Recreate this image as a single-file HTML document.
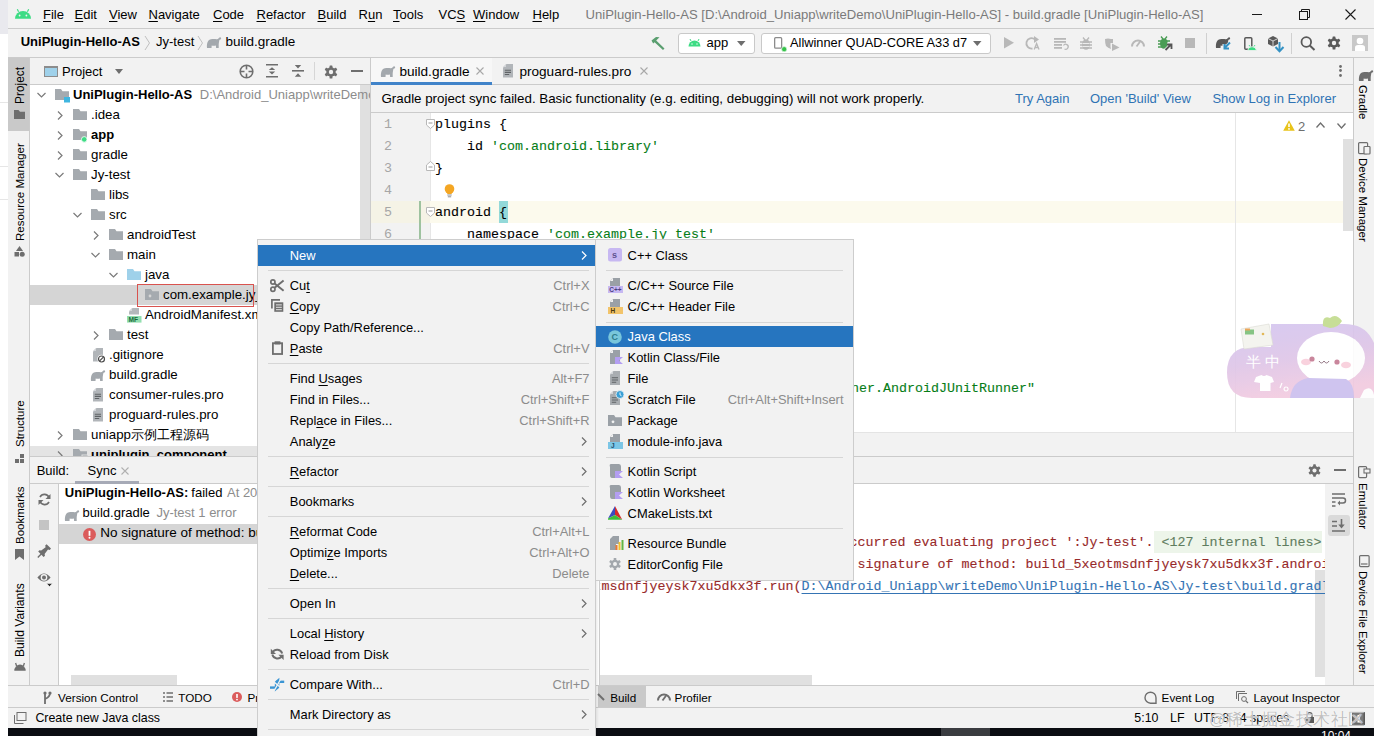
<!DOCTYPE html>
<html><head><meta charset="utf-8">
<style>
*{box-sizing:border-box;margin:0;padding:0}
html,body{width:1374px;height:736px;overflow:hidden;background:#fff}
body{position:relative;font-family:"Liberation Sans",sans-serif;font-size:13px;color:#000}
.a{position:absolute}
.t{position:absolute;white-space:pre;line-height:20px;height:20px}
u{text-decoration:underline;text-underline-offset:2px;text-decoration-thickness:1px}
svg{position:absolute;overflow:visible}
.clip{position:absolute;overflow:hidden}
</style></head><body>

<div class="a" style="left:0px;top:0px;width:8px;height:34px;background:#e9e9ee;"></div>
<div class="a" style="left:0px;top:34px;width:8px;height:694px;background:#ffffff;"></div>
<div class="a" style="left:0px;top:102px;width:8px;height:1px;background:#e6e6e6;"></div>
<div class="a" style="left:0px;top:166px;width:8px;height:1px;background:#e6e6e6;"></div>
<div class="a" style="left:0px;top:199px;width:8px;height:1px;background:#e6e6e6;"></div>
<div class="a" style="left:8px;top:0px;width:1366px;height:728px;background:#f2f2f2;"></div>
<div class="a" style="left:8px;top:28px;width:1366px;height:1px;background:#cbcbcb;"></div>
<svg style="left:15px;top:8px;" width="17" height="12" viewBox="0 0 17 12"><path d="M0 10.8 A8 7.8 0 0 1 16 10.8 Z" fill="#3ddc84"/><path d="M2.3 1.2 L3.6 3.8 M13.7 1.2 L12.4 3.8" stroke="#3ddc84" stroke-width="1.2"/><circle cx="4.6" cy="7.5" r="0.9" fill="#f2f2f2"/><circle cx="11.4" cy="7.5" r="0.9" fill="#f2f2f2"/></svg>
<div class="t" style="left:43px;top:4.80px;font-size:13px;color:#000;font-family:'Liberation Sans',sans-serif;"><u>F</u>ile</div>
<div class="t" style="left:74.5px;top:4.80px;font-size:13px;color:#000;font-family:'Liberation Sans',sans-serif;"><u>E</u>dit</div>
<div class="t" style="left:109px;top:4.80px;font-size:13px;color:#000;font-family:'Liberation Sans',sans-serif;"><u>V</u>iew</div>
<div class="t" style="left:148.5px;top:4.80px;font-size:13px;color:#000;font-family:'Liberation Sans',sans-serif;"><u>N</u>avigate</div>
<div class="t" style="left:213px;top:4.80px;font-size:13px;color:#000;font-family:'Liberation Sans',sans-serif;"><u>C</u>ode</div>
<div class="t" style="left:256.5px;top:4.80px;font-size:13px;color:#000;font-family:'Liberation Sans',sans-serif;"><u>R</u>efactor</div>
<div class="t" style="left:317.5px;top:4.80px;font-size:13px;color:#000;font-family:'Liberation Sans',sans-serif;"><u>B</u>uild</div>
<div class="t" style="left:358.5px;top:4.80px;font-size:13px;color:#000;font-family:'Liberation Sans',sans-serif;">R<u>u</u>n</div>
<div class="t" style="left:393px;top:4.80px;font-size:13px;color:#000;font-family:'Liberation Sans',sans-serif;"><u>T</u>ools</div>
<div class="t" style="left:438.5px;top:4.80px;font-size:13px;color:#000;font-family:'Liberation Sans',sans-serif;">VC<u>S</u></div>
<div class="t" style="left:473px;top:4.80px;font-size:13px;color:#000;font-family:'Liberation Sans',sans-serif;"><u>W</u>indow</div>
<div class="t" style="left:532.5px;top:4.80px;font-size:13px;color:#000;font-family:'Liberation Sans',sans-serif;"><u>H</u>elp</div>
<div class="t" style="left:585.6px;top:4.76px;font-size:13.1px;color:#7a7a7a;font-family:'Liberation Sans',sans-serif;">UniPlugin-Hello-AS [D:\Android_Uniapp\writeDemo\UniPlugin-Hello-AS] - build.gradle [UniPlugin-Hello-AS]</div>
<div class="a" style="left:1252px;top:14px;width:10px;height:1px;background:#1a1a1a;"></div>
<svg style="left:1299px;top:9px;" width="11" height="11" viewBox="0 0 11 11"><rect x="0.5" y="2.5" width="8" height="8" fill="none" stroke="#1a1a1a"/><path d="M2.5 2.5 V0.5 H10.5 V8.5 H8.5" fill="none" stroke="#1a1a1a"/></svg>
<svg style="left:1345px;top:9px;" width="11" height="11" viewBox="0 0 11 11"><path d="M0.5 0.5 L10.5 10.5 M10.5 0.5 L0.5 10.5" stroke="#1a1a1a" stroke-width="1.1"/></svg>
<div class="a" style="left:8px;top:57px;width:1366px;height:1px;background:#cbcbcb;"></div>
<div class="t" style="left:20.7px;top:32.10px;font-size:13px;color:#000;font-family:'Liberation Sans',sans-serif;font-weight:bold;">UniPlugin-Hello-AS</div>
<svg style="left:144px;top:35px;" width="7" height="16" viewBox="0 0 7 16"><path d="M1 1 L5.5 8 L1 15" fill="none" stroke="#c0c0c0" stroke-width="1"/></svg>
<div class="t" style="left:156px;top:32.10px;font-size:13px;color:#000;font-family:'Liberation Sans',sans-serif;">Jy-test</div>
<svg style="left:197px;top:35px;" width="7" height="16" viewBox="0 0 7 16"><path d="M1 1 L5.5 8 L1 15" fill="none" stroke="#c0c0c0" stroke-width="1"/></svg>
<svg style="left:206px;top:36px;" width="16" height="13" viewBox="0 0 16 13"><path transform="translate(0.5 1)" d="M0.5 11 C0.2 7.5 0.8 3.5 3.5 2.6 C5.5 2 8 2 10 2.2 C11 2.3 11.8 1.8 12.4 1 C13 0.2 14.2 0 14.6 0.9 C14.9 1.6 14.3 2.6 13.6 2.6 C13 2.6 12.8 3.4 12.6 4.5 L12.2 7 L12.2 11 L9.6 11 L9.4 8.6 C8 8.9 6.4 8.9 5.2 8.6 L5 11 Z" fill="#a3a8ad"/></svg>
<div class="t" style="left:225.5px;top:31.92px;font-size:13.5px;color:#000;font-family:'Liberation Sans',sans-serif;">build.gradle</div>
<svg style="left:650px;top:36px;" width="16" height="14" viewBox="0 0 16 14"><path d="M1.5 4.5 L6 1 L9.5 1.2 L6.2 4.6 L14.5 12.5 L13 14 L4.6 6.2 L3.2 7.4 Z" fill="#5a9e6f"/></svg>
<div class="a" style="left:677.5px;top:32.5px;width:77px;height:21px;background:#ffffff;border:1px solid #c9c9c9;border-radius:3px"></div>
<svg style="left:688px;top:38px;" width="13" height="9" viewBox="0 0 13 9"><path d="M0.5 8.5 A6 6 0 0 1 12.5 8.5 Z" fill="#3ddc84"/><path d="M3 3 L2 1 M10 3 L11 1" stroke="#3ddc84" stroke-width="1"/><circle cx="4" cy="6" r="0.7" fill="#fff"/><circle cx="9" cy="6" r="0.7" fill="#fff"/></svg>
<div class="t" style="left:706.5px;top:32.50px;font-size:13px;color:#000;font-family:'Liberation Sans',sans-serif;">app</div>
<svg style="left:737px;top:41px;" width="9" height="5" viewBox="0 0 9 5"><path d="M0 0 H8.5 L4.25 5 Z" fill="#6e6e6e"/></svg>
<div class="a" style="left:761.3px;top:32.5px;width:229.5px;height:21px;background:#ffffff;border:1px solid #c9c9c9;border-radius:3px"></div>
<svg style="left:774px;top:37px;" width="13" height="15" viewBox="0 0 13 15"><rect x="0.65" y="0.65" width="7" height="10.5" rx="1" fill="none" stroke="#8c8c8c" stroke-width="1.3"/><circle cx="10.2" cy="12.2" r="2.6" fill="#36c24a" stroke="#fff" stroke-width="0.6"/></svg>
<div class="t" style="left:790px;top:33.26px;font-size:12.8px;color:#000;font-family:'Liberation Sans',sans-serif;">Allwinner QUAD-CORE A33 d7</div>
<svg style="left:973px;top:41px;" width="9" height="5" viewBox="0 0 9 5"><path d="M0 0 H8.5 L4.25 5 Z" fill="#6e6e6e"/></svg>
<svg style="left:1004px;top:37px;" width="10" height="12" viewBox="0 0 10 12"><path d="M0 0 L10 5.7 L0 11.4 Z" fill="#b8b8b8"/></svg>
<svg style="left:1026px;top:36px;" width="15" height="14" viewBox="0 0 15 14"><path d="M9 3.5 A5.2 5.2 0 1 0 6.5 12.5" fill="none" stroke="#b8b8b8" stroke-width="1.8"/><path d="M8 0 L13 3.5 L8 7 Z" fill="#b8b8b8"/><path d="M8.2 13.5 L10.6 7.5 L13 13.5 M9.2 11.5 H12" fill="none" stroke="#b8b8b8" stroke-width="1.3"/></svg>
<svg style="left:1054px;top:38px;" width="15" height="12" viewBox="0 0 15 12"><rect x="0" y="0" width="12" height="1.8" fill="#b8b8b8"/><rect x="0" y="3" width="12" height="1.8" fill="#b8b8b8"/><rect x="0" y="6" width="8" height="1.8" fill="#b8b8b8"/><rect x="0" y="9" width="8" height="1.8" fill="#b8b8b8"/><path d="M9.5 7.5 A2.5 2.5 0 1 1 10.5 11" fill="none" stroke="#b8b8b8" stroke-width="1.3"/></svg>
<svg style="left:1080px;top:36.5px;" width="12" height="13" viewBox="0 0 12 13"><path d="M3 0.5 L5 3 M9 0.5 L7 3" stroke="#b8b8b8" stroke-width="1.3"/><ellipse cx="6" cy="7.5" rx="4" ry="5.2" fill="#b8b8b8"/><path d="M0 5 H12 M0 8 H12 M0 11 H12" stroke="#b8b8b8" stroke-width="1.4"/><path d="M2.5 6.5 H9.5 M2.5 9.5 H9.5" stroke="#f2f2f2" stroke-width="0.9"/></svg>
<svg style="left:1105px;top:37.5px;" width="15" height="13" viewBox="0 0 15 13"><path d="M0 1 Q3 0 6 1 L8 1 L8 5 L5.5 5 L5.5 9 L6 11 Q3 10 1 8 Q0 5 0 1 Z" fill="#b8b8b8"/><path d="M7 5.5 L14.5 9.5 L7 13 Z" fill="#b8b8b8"/></svg>
<svg style="left:1131px;top:38px;" width="14" height="9" viewBox="0 0 14 9"><path d="M1 8.5 A6 6 0 0 1 13 8.5" fill="none" stroke="#b8b8b8" stroke-width="2"/><path d="M5.5 8.5 L9.5 3" stroke="#b8b8b8" stroke-width="1.8"/></svg>
<svg style="left:1158px;top:36px;" width="15" height="15" viewBox="0 0 15 15"><path d="M3 0.5 L5 3 M9 0.5 L7 3" stroke="#499c54" stroke-width="1.3"/><ellipse cx="6" cy="7.5" rx="4" ry="5.2" fill="#499c54"/><path d="M0 5 H12 M0 8 H12 M0 11 H12" stroke="#499c54" stroke-width="1.4"/><path d="M7.5 14 L13 8.5 M9 8 H14 V13" fill="none" stroke="#f2f2f2" stroke-width="3.2"/><path d="M7.5 14 L13 8.5 M9 8.5 H13.5 V13" fill="none" stroke="#555" stroke-width="1.8"/></svg>
<div class="a" style="left:1185px;top:38px;width:10px;height:10px;background:#b8b8b8;"></div>
<div class="a" style="left:1206px;top:33px;width:1px;height:21px;background:#d0d0d0;"></div>
<svg style="left:1215px;top:36px;" width="17" height="16" viewBox="0 0 17 16"><path transform="translate(0.5 1)" d="M0.5 11 C0.2 7.5 0.8 3.5 3.5 2.6 C5.5 2 8 2 10 2.2 C11 2.3 11.8 1.8 12.4 1 C13 0.2 14.2 0 14.6 0.9 C14.9 1.6 14.3 2.6 13.6 2.6 C13 2.6 12.8 3.4 12.6 4.5 L12.2 7 L12.2 11 L9.6 11 L9.4 8.6 C8 8.9 6.4 8.9 5.2 8.6 L5 11 Z" fill="#595959"/><path d="M15 6.5 L9.5 12 M9 8 V12.5 H13.5" fill="none" stroke="#f2f2f2" stroke-width="3"/><path d="M15 6.5 L9.5 12 M9.5 8 V12.5 H14" fill="none" stroke="#3592c4" stroke-width="2"/></svg>
<svg style="left:1244px;top:36.5px;" width="13" height="14" viewBox="0 0 13 14"><rect x="0.8" y="0.8" width="7" height="11.5" rx="1" fill="none" stroke="#595959" stroke-width="1.5"/><path d="M3.6 13.5 A4.5 4.5 0 0 1 12.5 13.5 Z" fill="#3ddc84" stroke="#f2f2f2" stroke-width="0.8"/><path d="M5 8 L6 9.5 M11 8 L10 9.5" stroke="#3ddc84" stroke-width="0.9"/></svg>
<svg style="left:1267.5px;top:36px;" width="16" height="16" viewBox="0 0 16 16"><path d="M5 0 L10 2.5 L10 8 L5 10.5 L0 8 L0 2.5 Z" fill="#595959"/><path d="M0 2.5 L5 5 L10 2.5 M5 5 V10.5" fill="none" stroke="#f2f2f2" stroke-width="0.8"/><path d="M11.5 6 V14" stroke="#3592c4" stroke-width="2"/><path d="M7.5 11 L11.5 15.3 L15.5 11" fill="none" stroke="#3592c4" stroke-width="2"/></svg>
<div class="a" style="left:1291px;top:33px;width:1px;height:21px;background:#d0d0d0;"></div>
<svg style="left:1300px;top:35.5px;" width="16" height="15" viewBox="0 0 16 15"><circle cx="6.3" cy="6" r="4.8" fill="none" stroke="#5a5a5a" stroke-width="1.8"/><path d="M9.8 9.5 L14.5 14" stroke="#5a5a5a" stroke-width="2"/></svg>
<svg style="left:1327px;top:36px;" width="14" height="14" viewBox="0 0 14 14"><circle cx="7" cy="7" r="4.752" fill="#5a5a5a"/><rect x="5.55" y="0.40" width="2.90" height="13.20" rx="0.66" fill="#5a5a5a" transform="rotate(0 7 7)"/><rect x="5.55" y="0.40" width="2.90" height="13.20" rx="0.66" fill="#5a5a5a" transform="rotate(60 7 7)"/><rect x="5.55" y="0.40" width="2.90" height="13.20" rx="0.66" fill="#5a5a5a" transform="rotate(120 7 7)"/><circle cx="7" cy="7" r="2.178" fill="#f2f2f2"/></svg>
<svg style="left:1352px;top:35px;" width="16" height="16" viewBox="0 0 16 16"><rect width="16" height="16" fill="#c8c8c8"/><circle cx="8" cy="6" r="3.3" fill="#fff"/><path d="M3 16 V12.5 Q3 10 6 10 H10 Q13 10 13 12.5 V16 Z" fill="#fff"/></svg>
<!--TOOLBAR-->
<div class="a" style="left:29px;top:58px;width:1px;height:627px;background:#cbcbcb;"></div>
<div class="a" style="left:8px;top:58px;width:21px;height:73px;background:#c9c9c9;"></div>
<div class="t" style="left:10px;top:103.6px;font-size:11.9px;color:#000;transform-origin:0 0;transform:rotate(-90deg)">Project</div>
<svg style="left:14px;top:110px;" width="11" height="9" viewBox="0 0 11 9"><path d="M0 0 H4.5 L6 1.8 H11 V9 H0 Z" fill="#6e6e6e"/></svg>
<div class="t" style="left:10px;top:241px;font-size:11.5px;color:#000;transform-origin:0 0;transform:rotate(-90deg)">Resource Manager</div>
<svg style="left:14px;top:246px;" width="11" height="11" viewBox="0 0 11 11"><path d="M5.5 0 L9 5 H2 Z" fill="#6e6e6e"/><rect x="0.5" y="6" width="4.5" height="4.5" fill="#6e6e6e"/><circle cx="8.2" cy="8.2" r="2.5" fill="#6e6e6e"/></svg>
<div class="t" style="left:10px;top:447px;font-size:11.5px;color:#000;transform-origin:0 0;transform:rotate(-90deg)">Structure</div>
<svg style="left:15px;top:453.5px;" width="10" height="10" viewBox="0 0 10 10"><rect x="5" y="0" width="4" height="4" fill="#6e6e6e"/><rect x="0" y="5" width="4" height="4" fill="#6e6e6e"/><rect x="5" y="5" width="4" height="4" fill="#6e6e6e"/></svg>
<div class="t" style="left:10px;top:544px;font-size:11.5px;color:#000;transform-origin:0 0;transform:rotate(-90deg)">Bookmarks</div>
<svg style="left:15px;top:549px;" width="9" height="11" viewBox="0 0 9 11"><path d="M0 0 H9 V11 L4.5 7.5 L0 11 Z" fill="#6e6e6e"/></svg>
<div class="t" style="left:10px;top:656.5px;font-size:12.1px;color:#000;transform-origin:0 0;transform:rotate(-90deg)">Build Variants</div>
<svg style="left:14px;top:661.5px;" width="12" height="9" viewBox="0 0 12 9"><path d="M0.3 8.8 A5.7 6.2 0 0 1 11.7 8.8 Z" fill="#6e6e6e"/><path d="M2.6 4 L1.6 1 M9.4 4 L10.4 1" stroke="#6e6e6e" stroke-width="1.3"/></svg>
<div class="a" style="left:1353px;top:58px;width:1px;height:627px;background:#cbcbcb;"></div>
<svg style="left:1358px;top:69px;" width="14" height="11" viewBox="0 0 14 11"><path transform="translate(0.5 1)" d="M0.5 11 C0.2 7.5 0.8 3.5 3.5 2.6 C5.5 2 8 2 10 2.2 C11 2.3 11.8 1.8 12.4 1 C13 0.2 14.2 0 14.6 0.9 C14.9 1.6 14.3 2.6 13.6 2.6 C13 2.6 12.8 3.4 12.6 4.5 L12.2 7 L12.2 11 L9.6 11 L9.4 8.6 C8 8.9 6.4 8.9 5.2 8.6 L5 11 Z" fill="#6e6e6e"/></svg>
<div class="t" style="left:1373px;top:85px;font-size:11.5px;color:#000;transform-origin:0 0;transform:rotate(90deg)">Gradle</div>
<svg style="left:1358px;top:141.5px;" width="13" height="13" viewBox="0 0 13 13"><rect x="0.6" y="0.6" width="9" height="11" rx="1" fill="none" stroke="#6e6e6e" stroke-width="1.2"/><rect x="6" y="4.5" width="6" height="7.5" rx="0.8" fill="#f2f2f2" stroke="#6e6e6e" stroke-width="1.2"/></svg>
<div class="t" style="left:1373px;top:157.5px;font-size:11.5px;color:#000;transform-origin:0 0;transform:rotate(90deg)">Device Manager</div>
<svg style="left:1358px;top:466px;" width="13" height="13" viewBox="0 0 13 13"><rect x="0.6" y="0.6" width="8" height="11" rx="1" fill="none" stroke="#6e6e6e" stroke-width="1.2"/><rect x="6" y="3" width="6" height="4" fill="#f2f2f2" stroke="#6e6e6e" stroke-width="1.1"/></svg>
<div class="t" style="left:1373px;top:482.5px;font-size:11.5px;color:#000;transform-origin:0 0;transform:rotate(90deg)">Emulator</div>
<svg style="left:1358.5px;top:554.5px;" width="11" height="12" viewBox="0 0 11 12"><rect x="0.6" y="0.6" width="9.5" height="11" rx="1" fill="none" stroke="#6e6e6e" stroke-width="1.2"/><path d="M2 9 H8.5" stroke="#6e6e6e" stroke-width="1.2"/></svg>
<div class="t" style="left:1373px;top:571px;font-size:11.5px;color:#000;transform-origin:0 0;transform:rotate(90deg)">Device File Explorer</div>
<div class="a" style="left:30px;top:58px;width:340px;height:26px;background:#f2f2f2;"></div>
<div class="a" style="left:30px;top:84px;width:340px;height:1px;background:#cbcbcb;"></div>
<svg style="left:43.5px;top:66px;" width="14" height="11" viewBox="0 0 14 11"><rect x="0.5" y="0.5" width="13" height="10" fill="#9fd1ea" stroke="#8c8c8c" stroke-width="1"/><rect x="0" y="0" width="14" height="2" fill="#8c8c8c"/></svg>
<div class="t" style="left:62px;top:61.50px;font-size:13px;color:#000;font-family:'Liberation Sans',sans-serif;">Project</div>
<svg style="left:115px;top:69px;" width="8" height="5" viewBox="0 0 8 5"><path d="M0 0 H8 L4 5 Z" fill="#6e6e6e"/></svg>
<svg style="left:238.5px;top:64px;" width="15" height="15" viewBox="0 0 15 15"><circle cx="7.5" cy="7.5" r="6.3" fill="none" stroke="#6e6e6e" stroke-width="1.6"/><path d="M7.5 1 V5.5 M7.5 9.5 V14 M1 7.5 H5.5 M9.5 7.5 H14" stroke="#6e6e6e" stroke-width="1.6"/></svg>
<svg style="left:266px;top:64px;" width="13" height="15" viewBox="0 0 13 15"><path d="M0 0.8 H12 M0 12.8 H12" stroke="#6e6e6e" stroke-width="1.6"/><path d="M6 3.2 L2.8 6 H9.2 Z M6 10.4 L2.8 7.6 H9.2 Z" fill="#6e6e6e"/></svg>
<svg style="left:292px;top:64px;" width="13" height="15" viewBox="0 0 13 15"><path d="M0 6.8 H12" stroke="#6e6e6e" stroke-width="1.6"/><path d="M6 4.4 L2.8 1 H9.2 Z M6 9.2 L2.8 12.8 H9.2 Z" fill="#6e6e6e"/></svg>
<div class="a" style="left:314px;top:62px;width:1px;height:18px;background:#d6d6d6;"></div>
<svg style="left:324px;top:64.5px;" width="14" height="14" viewBox="0 0 14 14"><circle cx="7" cy="7" r="4.752" fill="#6e6e6e"/><rect x="5.55" y="0.40" width="2.90" height="13.20" rx="0.66" fill="#6e6e6e" transform="rotate(0 7 7)"/><rect x="5.55" y="0.40" width="2.90" height="13.20" rx="0.66" fill="#6e6e6e" transform="rotate(60 7 7)"/><rect x="5.55" y="0.40" width="2.90" height="13.20" rx="0.66" fill="#6e6e6e" transform="rotate(120 7 7)"/><circle cx="7" cy="7" r="2.178" fill="#f2f2f2"/></svg>
<div class="a" style="left:351px;top:70px;width:12px;height:2px;background:#6e6e6e;"></div>
<div class="a" style="left:30px;top:85px;width:340px;height:371px;background:#ffffff;"></div>
<div class="a" style="left:360px;top:85px;width:10px;height:371px;background:#e0e0e0;"></div>
<div class="clip" style="left:30px;top:85px;width:340px;height:371px">
<svg style="left:7px;top:7px;" width="9" height="6" viewBox="0 0 9 6"><path d="M0.5 1 L4.5 5 L8.5 1" fill="none" stroke="#7a7a7a" stroke-width="1.2"/></svg>
<svg style="left:25px;top:4.2px;" width="15" height="12" viewBox="0 0 15 12"><path d="M0 0 H6 L7.5 2.3 H14 V11 H0 Z" fill="#a5aaaf"/><rect x="9" y="8" width="6" height="5.5" fill="#40b6e0"/></svg>
<div class="t" style="left:43px;top:0.10px;font-size:13px;color:#000;font-family:'Liberation Sans',sans-serif;font-weight:bold;">UniPlugin-Hello-AS</div>
<div class="t" style="left:169.8px;top:0.10px;font-size:13px;color:#8c8c8c;font-family:'Liberation Sans',sans-serif;">D:\Android_Uniapp\writeDemo\UniPlugin-Hello-AS</div>
<svg style="left:27px;top:25.5px;" width="6" height="9" viewBox="0 0 6 9"><path d="M1 0.5 L5 4.5 L1 8.5" fill="none" stroke="#7a7a7a" stroke-width="1.2"/></svg>
<svg style="left:43px;top:24.2px;" width="15" height="12" viewBox="0 0 15 12"><path d="M0 0 H6 L7.5 2.3 H14 V11 H0 Z" fill="#a5aaaf"/></svg>
<div class="t" style="left:61px;top:19.99px;font-size:13.3px;color:#000;font-family:'Liberation Sans',sans-serif;">.idea</div>
<svg style="left:27px;top:45.5px;" width="6" height="9" viewBox="0 0 6 9"><path d="M1 0.5 L5 4.5 L1 8.5" fill="none" stroke="#7a7a7a" stroke-width="1.2"/></svg>
<svg style="left:43px;top:44.2px;" width="15" height="12" viewBox="0 0 15 12"><path d="M0 0 H6 L7.5 2.3 H14 V11 H0 Z" fill="#a5aaaf"/><circle cx="11.2" cy="10.4" r="2.8" fill="#3ddc84" stroke="#fff" stroke-width="0.8"/></svg>
<div class="t" style="left:61px;top:40.10px;font-size:13px;color:#000;font-family:'Liberation Sans',sans-serif;font-weight:bold;">app</div>
<svg style="left:27px;top:65.5px;" width="6" height="9" viewBox="0 0 6 9"><path d="M1 0.5 L5 4.5 L1 8.5" fill="none" stroke="#7a7a7a" stroke-width="1.2"/></svg>
<svg style="left:43px;top:64.2px;" width="15" height="12" viewBox="0 0 15 12"><path d="M0 0 H6 L7.5 2.3 H14 V11 H0 Z" fill="#a5aaaf"/></svg>
<div class="t" style="left:61px;top:59.99px;font-size:13.3px;color:#000;font-family:'Liberation Sans',sans-serif;">gradle</div>
<svg style="left:25px;top:87px;" width="9" height="6" viewBox="0 0 9 6"><path d="M0.5 1 L4.5 5 L8.5 1" fill="none" stroke="#7a7a7a" stroke-width="1.2"/></svg>
<svg style="left:43px;top:84.2px;" width="15" height="12" viewBox="0 0 15 12"><path d="M0 0 H6 L7.5 2.3 H14 V11 H0 Z" fill="#a5aaaf"/></svg>
<div class="t" style="left:61px;top:79.99px;font-size:13.3px;color:#000;font-family:'Liberation Sans',sans-serif;">Jy-test</div>
<svg style="left:61px;top:104.2px;" width="15" height="12" viewBox="0 0 15 12"><path d="M0 0 H6 L7.5 2.3 H14 V11 H0 Z" fill="#a5aaaf"/></svg>
<div class="t" style="left:79px;top:99.99px;font-size:13.3px;color:#000;font-family:'Liberation Sans',sans-serif;">libs</div>
<svg style="left:43px;top:127px;" width="9" height="6" viewBox="0 0 9 6"><path d="M0.5 1 L4.5 5 L8.5 1" fill="none" stroke="#7a7a7a" stroke-width="1.2"/></svg>
<svg style="left:61px;top:124.2px;" width="15" height="12" viewBox="0 0 15 12"><path d="M0 0 H6 L7.5 2.3 H14 V11 H0 Z" fill="#a5aaaf"/></svg>
<div class="t" style="left:79px;top:119.99px;font-size:13.3px;color:#000;font-family:'Liberation Sans',sans-serif;">src</div>
<svg style="left:63px;top:145.5px;" width="6" height="9" viewBox="0 0 6 9"><path d="M1 0.5 L5 4.5 L1 8.5" fill="none" stroke="#7a7a7a" stroke-width="1.2"/></svg>
<svg style="left:79px;top:144.2px;" width="15" height="12" viewBox="0 0 15 12"><path d="M0 0 H6 L7.5 2.3 H14 V11 H0 Z" fill="#a5aaaf"/></svg>
<div class="t" style="left:97px;top:139.99px;font-size:13.3px;color:#000;font-family:'Liberation Sans',sans-serif;">androidTest</div>
<svg style="left:61px;top:167px;" width="9" height="6" viewBox="0 0 9 6"><path d="M0.5 1 L4.5 5 L8.5 1" fill="none" stroke="#7a7a7a" stroke-width="1.2"/></svg>
<svg style="left:79px;top:164.2px;" width="15" height="12" viewBox="0 0 15 12"><path d="M0 0 H6 L7.5 2.3 H14 V11 H0 Z" fill="#a5aaaf"/></svg>
<div class="t" style="left:97px;top:159.99px;font-size:13.3px;color:#000;font-family:'Liberation Sans',sans-serif;">main</div>
<svg style="left:79px;top:187px;" width="9" height="6" viewBox="0 0 9 6"><path d="M0.5 1 L4.5 5 L8.5 1" fill="none" stroke="#7a7a7a" stroke-width="1.2"/></svg>
<svg style="left:97px;top:184.2px;" width="15" height="12" viewBox="0 0 15 12"><path d="M0 0 H6 L7.5 2.3 H14 V11 H0 Z" fill="#9fd1ea"/></svg>
<div class="t" style="left:115px;top:179.99px;font-size:13.3px;color:#000;font-family:'Liberation Sans',sans-serif;">java</div>
<div class="a" style="left:0px;top:200px;width:330px;height:20px;background:#d5d5d5;"></div>
<svg style="left:115px;top:204.2px;" width="15" height="12" viewBox="0 0 15 12"><path d="M0 0 H6 L7.5 2.3 H14 V11 H0 Z" fill="#a5aaaf"/><circle cx="5" cy="7" r="1.4" fill="#d5d5d5"/></svg>
<div class="t" style="left:133px;top:199.99px;font-size:13.3px;color:#000;font-family:'Liberation Sans',sans-serif;">com.example.jy_test</div>
<svg style="left:97px;top:223px;" width="15" height="15" viewBox="0 0 15 15"><path d="M5.5 0 H12 V6.6 H2 V3.5 Z" fill="#b4b8bc"/><path d="M2 3 L5 0 V3 Z" fill="#d3d6d9"/><rect x="0" y="8" width="14.5" height="6.6" fill="#93dfb0"/><text x="1.6" y="13.9" font-size="6.6" font-family="Liberation Sans" font-weight="bold" fill="#1b6b3c">MF</text></svg>
<div class="t" style="left:115px;top:219.99px;font-size:13.3px;color:#000;font-family:'Liberation Sans',sans-serif;">AndroidManifest.xml</div>
<svg style="left:63px;top:245.5px;" width="6" height="9" viewBox="0 0 6 9"><path d="M1 0.5 L5 4.5 L1 8.5" fill="none" stroke="#7a7a7a" stroke-width="1.2"/></svg>
<svg style="left:79px;top:244.2px;" width="15" height="12" viewBox="0 0 15 12"><path d="M0 0 H6 L7.5 2.3 H14 V11 H0 Z" fill="#a5aaaf"/></svg>
<div class="t" style="left:97px;top:239.99px;font-size:13.3px;color:#000;font-family:'Liberation Sans',sans-serif;">test</div>
<svg style="left:62px;top:263px;" width="15" height="15" viewBox="0 0 15 15"><path d="M4.5 0 H11 V13.5 H1 V3.5 Z" fill="#b1b5b9"/><path d="M1 3 L4 0 V3 Z" fill="#d3d6d9"/><circle cx="9.5" cy="11" r="4.2" fill="#fff"/><circle cx="9.5" cy="11" r="3" fill="none" stroke="#4a4a4a" stroke-width="1.2"/><path d="M7.4 13.1 L11.6 8.9" stroke="#4a4a4a" stroke-width="1.2"/></svg>
<div class="t" style="left:79px;top:259.99px;font-size:13.3px;color:#000;font-family:'Liberation Sans',sans-serif;">.gitignore</div>
<svg style="left:60px;top:284px;" width="16" height="13" viewBox="0 0 16 13"><path transform="translate(0.5 1)" d="M0.5 11 C0.2 7.5 0.8 3.5 3.5 2.6 C5.5 2 8 2 10 2.2 C11 2.3 11.8 1.8 12.4 1 C13 0.2 14.2 0 14.6 0.9 C14.9 1.6 14.3 2.6 13.6 2.6 C13 2.6 12.8 3.4 12.6 4.5 L12.2 7 L12.2 11 L9.6 11 L9.4 8.6 C8 8.9 6.4 8.9 5.2 8.6 L5 11 Z" fill="#a3a8ad"/></svg>
<div class="t" style="left:79px;top:279.99px;font-size:13.3px;color:#000;font-family:'Liberation Sans',sans-serif;">build.gradle</div>
<svg style="left:62px;top:303px;" width="12" height="14" viewBox="0 0 12 14"><path d="M4.5 0 H11 V13.5 H1 V3.5 Z" fill="#b1b5b9"/><path d="M1 3 L4 0 V3 Z" fill="#d3d6d9"/><path d="M2.8 6.3 H9 M2.8 8.4 H9 M2.8 10.5 H7.2" stroke="#5f6366" stroke-width="1.1"/></svg>
<div class="t" style="left:79px;top:299.99px;font-size:13.3px;color:#000;font-family:'Liberation Sans',sans-serif;">consumer-rules.pro</div>
<svg style="left:62px;top:323px;" width="12" height="14" viewBox="0 0 12 14"><path d="M4.5 0 H11 V13.5 H1 V3.5 Z" fill="#b1b5b9"/><path d="M1 3 L4 0 V3 Z" fill="#d3d6d9"/><path d="M2.8 6.3 H9 M2.8 8.4 H9 M2.8 10.5 H7.2" stroke="#5f6366" stroke-width="1.1"/></svg>
<div class="t" style="left:79px;top:319.99px;font-size:13.3px;color:#000;font-family:'Liberation Sans',sans-serif;">proguard-rules.pro</div>
<svg style="left:27px;top:345.5px;" width="6" height="9" viewBox="0 0 6 9"><path d="M1 0.5 L5 4.5 L1 8.5" fill="none" stroke="#7a7a7a" stroke-width="1.2"/></svg>
<svg style="left:43px;top:344.2px;" width="15" height="12" viewBox="0 0 15 12"><path d="M0 0 H6 L7.5 2.3 H14 V11 H0 Z" fill="#a5aaaf"/></svg>
<div class="t" style="left:61px;top:339.99px;font-size:13.3px;color:#000;font-family:'Liberation Sans',sans-serif;">uniapp示例工程源码</div>
<div class="a" style="left:0px;top:361px;width:330px;height:11px;background:#e4e4e4;"></div>
<svg style="left:27px;top:365.5px;" width="6" height="9" viewBox="0 0 6 9"><path d="M1 0.5 L5 4.5 L1 8.5" fill="none" stroke="#7a7a7a" stroke-width="1.2"/></svg>
<svg style="left:43px;top:364.2px;" width="15" height="12" viewBox="0 0 15 12"><path d="M0 0 H6 L7.5 2.3 H14 V11 H0 Z" fill="#a5aaaf"/><rect x="9" y="6" width="6" height="6" fill="#9aa0a6" stroke="#e4e4e4" stroke-width="1"/></svg>
<div class="t" style="left:61px;top:360.10px;font-size:13px;color:#000;font-family:'Liberation Sans',sans-serif;font-weight:bold;">uniplugin_component</div>
</div>
<div class="a" style="left:136.9px;top:284px;width:117px;height:23.4px;background:transparent;border:1.4px solid #d9534f"></div>
<div class="a" style="left:370px;top:58px;width:1px;height:398px;background:#cbcbcb;"></div>
<div class="a" style="left:371px;top:58px;width:982px;height:26px;background:#f2f2f2;"></div>
<div class="a" style="left:371px;top:84px;width:982px;height:1px;background:#cbcbcb;"></div>
<div class="a" style="left:371px;top:58px;width:121px;height:24px;background:#f7f7f7;"></div>
<div class="a" style="left:371px;top:82px;width:121px;height:3px;background:#4083c9;"></div>
<svg style="left:379.5px;top:65px;" width="16" height="13" viewBox="0 0 16 13"><path transform="translate(0.5 1)" d="M0.5 11 C0.2 7.5 0.8 3.5 3.5 2.6 C5.5 2 8 2 10 2.2 C11 2.3 11.8 1.8 12.4 1 C13 0.2 14.2 0 14.6 0.9 C14.9 1.6 14.3 2.6 13.6 2.6 C13 2.6 12.8 3.4 12.6 4.5 L12.2 7 L12.2 11 L9.6 11 L9.4 8.6 C8 8.9 6.4 8.9 5.2 8.6 L5 11 Z" fill="#a3a8ad"/></svg>
<div class="t" style="left:399.4px;top:61.89px;font-size:13.6px;color:#000;font-family:'Liberation Sans',sans-serif;">build.gradle</div>
<svg style="left:476px;top:67px;" width="8" height="8" viewBox="0 0 8 8"><path d="M0.5 0.5 L7.5 7.5 M7.5 0.5 L0.5 7.5" stroke="#a8a8a8" stroke-width="1.1"/></svg>
<svg style="left:502px;top:63.5px;" width="12" height="15" viewBox="0 0 12 15"><path d="M4.5 0 H11 V13.5 H1 V3.5 Z" fill="#b1b5b9"/><path d="M1 3 L4 0 V3 Z" fill="#d3d6d9"/><path d="M2.8 6.3 H9 M2.8 8.4 H9 M2.8 10.5 H7.2" stroke="#5f6366" stroke-width="1.1"/></svg>
<div class="t" style="left:519.4px;top:61.89px;font-size:13.6px;color:#000;font-family:'Liberation Sans',sans-serif;">proguard-rules.pro</div>
<svg style="left:639.5px;top:67px;" width="8" height="8" viewBox="0 0 8 8"><path d="M0.5 0.5 L7.5 7.5 M7.5 0.5 L0.5 7.5" stroke="#a8a8a8" stroke-width="1.1"/></svg>
<svg style="left:1339px;top:64.5px;" width="3" height="3" viewBox="0 0 3 3"><circle cx="1.5" cy="1.5" r="1.4" fill="#6e6e6e"/></svg>
<svg style="left:1339px;top:69.0px;" width="3" height="3" viewBox="0 0 3 3"><circle cx="1.5" cy="1.5" r="1.4" fill="#6e6e6e"/></svg>
<svg style="left:1339px;top:73.5px;" width="3" height="3" viewBox="0 0 3 3"><circle cx="1.5" cy="1.5" r="1.4" fill="#6e6e6e"/></svg>
<div class="a" style="left:371px;top:85px;width:982px;height:27px;background:#f2f2f2;"></div>
<div class="a" style="left:371px;top:112px;width:982px;height:1px;background:#cbcbcb;"></div>
<div class="t" style="left:381.5px;top:88.98px;font-size:13.33px;color:#000;font-family:'Liberation Sans',sans-serif;">Gradle project sync failed. Basic functionality (e.g. editing, debugging) will not work properly.</div>
<div class="t" style="left:1015px;top:89.10px;font-size:13px;color:#2f73b4;font-family:'Liberation Sans',sans-serif;">Try Again</div>
<div class="t" style="left:1090px;top:89.10px;font-size:13px;color:#2f73b4;font-family:'Liberation Sans',sans-serif;">Open &#x27;Build&#x27; View</div>
<div class="t" style="left:1212.4px;top:89.10px;font-size:13px;color:#2f73b4;font-family:'Liberation Sans',sans-serif;">Show Log in Explorer</div>
<div class="a" style="left:371px;top:113px;width:982px;height:319px;background:#ffffff;"></div>
<div class="a" style="left:371px;top:113px;width:59px;height:319px;background:#f2f2f2;"></div>
<div class="a" style="left:430px;top:113px;width:1px;height:319px;background:#e6e6e6;"></div>
<div class="a" style="left:371px;top:201px;width:982px;height:22px;background:#fcfaed;"></div>
<div class="a" style="left:371px;top:201px;width:59px;height:22px;background:#f5f3e6;"></div>
<div class="a" style="left:419px;top:201px;width:2px;height:231px;background:#9ec29f;"></div>
<div class="a" style="left:1235px;top:113px;width:1px;height:319px;background:#e6e6e6;"></div>
<div class="a" style="left:1343px;top:139px;width:10px;height:92px;background:#e0e0e0;"></div>
<div class="t" style="left:384px;top:114.75px;font-size:13.33px;color:#a6a6a6;font-family:'Liberation Mono',monospace;">1</div>
<div class="t" style="left:384px;top:136.75px;font-size:13.33px;color:#a6a6a6;font-family:'Liberation Mono',monospace;">2</div>
<div class="t" style="left:384px;top:158.75px;font-size:13.33px;color:#a6a6a6;font-family:'Liberation Mono',monospace;">3</div>
<div class="t" style="left:384px;top:180.75px;font-size:13.33px;color:#a6a6a6;font-family:'Liberation Mono',monospace;">4</div>
<div class="t" style="left:384px;top:202.75px;font-size:13.33px;color:#a6a6a6;font-family:'Liberation Mono',monospace;">5</div>
<div class="t" style="left:384px;top:224.75px;font-size:13.33px;color:#a6a6a6;font-family:'Liberation Mono',monospace;">6</div>
<div class="t" style="left:384px;top:246.75px;font-size:13.33px;color:#a6a6a6;font-family:'Liberation Mono',monospace;">7</div>
<div class="t" style="left:384px;top:268.75px;font-size:13.33px;color:#a6a6a6;font-family:'Liberation Mono',monospace;">8</div>
<div class="t" style="left:384px;top:290.75px;font-size:13.33px;color:#a6a6a6;font-family:'Liberation Mono',monospace;">9</div>
<div class="t" style="left:376px;top:312.75px;font-size:13.33px;color:#a6a6a6;font-family:'Liberation Mono',monospace;">10</div>
<div class="t" style="left:376px;top:334.75px;font-size:13.33px;color:#a6a6a6;font-family:'Liberation Mono',monospace;">11</div>
<div class="t" style="left:376px;top:356.75px;font-size:13.33px;color:#a6a6a6;font-family:'Liberation Mono',monospace;">12</div>
<div class="t" style="left:376px;top:378.75px;font-size:13.33px;color:#a6a6a6;font-family:'Liberation Mono',monospace;">13</div>
<div class="t" style="left:376px;top:400.75px;font-size:13.33px;color:#a6a6a6;font-family:'Liberation Mono',monospace;">14</div>
<div class="t" style="left:376px;top:422.75px;font-size:13.33px;color:#a6a6a6;font-family:'Liberation Mono',monospace;">15</div>
<div class="t" style="left:435px;top:114.75px;font-size:13.33px;color:#000;font-family:'Liberation Mono',monospace;-webkit-text-stroke:0.1px currentColor"><span style="color:#000000">plugins {</span></div>
<div class="t" style="left:435px;top:136.75px;font-size:13.33px;color:#000;font-family:'Liberation Mono',monospace;-webkit-text-stroke:0.1px currentColor"><span style="color:#000000">    id </span><span style="color:#067d17">&#x27;com.android.library&#x27;</span></div>
<div class="t" style="left:435px;top:158.75px;font-size:13.33px;color:#000;font-family:'Liberation Mono',monospace;-webkit-text-stroke:0.1px currentColor"><span style="color:#000000">}</span></div>
<div class="a" style="left:499px;top:201px;width:9px;height:22px;background:#93d9d9;"></div>
<div class="t" style="left:435px;top:202.75px;font-size:13.33px;color:#000;font-family:'Liberation Mono',monospace;-webkit-text-stroke:0.1px currentColor"><span style="color:#000000">android {</span></div>
<div class="t" style="left:435px;top:224.75px;font-size:13.33px;color:#000;font-family:'Liberation Mono',monospace;-webkit-text-stroke:0.1px currentColor"><span style="color:#000000">    namespace </span><span style="color:#067d17">&#x27;com.example.jy_test&#x27;</span></div>
<div class="t" style="left:435px;top:246.75px;font-size:13.33px;color:#000;font-family:'Liberation Mono',monospace;-webkit-text-stroke:0.1px currentColor"><span style="color:#000000">    compileSdk 32</span></div>
<div class="t" style="left:435px;top:290.75px;font-size:13.33px;color:#000;font-family:'Liberation Mono',monospace;-webkit-text-stroke:0.1px currentColor"><span style="color:#000000">    defaultConfig {</span></div>
<div class="t" style="left:435px;top:312.75px;font-size:13.33px;color:#000;font-family:'Liberation Mono',monospace;-webkit-text-stroke:0.1px currentColor"><span style="color:#000000">        minSdk 21</span></div>
<div class="t" style="left:435px;top:334.75px;font-size:13.33px;color:#000;font-family:'Liberation Mono',monospace;-webkit-text-stroke:0.1px currentColor"><span style="color:#000000">        targetSdk 32</span></div>
<div class="t" style="left:435px;top:378.75px;font-size:13.33px;color:#000;font-family:'Liberation Mono',monospace;-webkit-text-stroke:0.1px currentColor"><span style="color:#000000">        testInstrumentationRunner </span><span style="color:#067d17">&quot;androidx.test.runner.AndroidJUnitRunner&quot;</span></div>
<div class="t" style="left:435px;top:400.75px;font-size:13.33px;color:#000;font-family:'Liberation Mono',monospace;-webkit-text-stroke:0.1px currentColor"><span style="color:#000000">        consumerProguardFiles </span><span style="color:#067d17">&quot;consumer-rules.pro&quot;</span></div>
<div class="t" style="left:435px;top:422.75px;font-size:13.33px;color:#000;font-family:'Liberation Mono',monospace;-webkit-text-stroke:0.1px currentColor"><span style="color:#000000">    }</span></div>
<svg style="left:426px;top:119px;" width="10" height="10" viewBox="0 0 10 10"><path d="M0.5 0.5 H8.5 V6 L4.5 9.5 L0.5 6 Z" fill="#fff" stroke="#b8b8b8" stroke-width="1"/><path d="M2.5 4 H6.5" stroke="#9a9a9a" stroke-width="1"/></svg>
<svg style="left:426px;top:161px;" width="10" height="10" viewBox="0 0 10 10"><path d="M0.5 9.5 H8.5 V4 L4.5 0.5 L0.5 4 Z" fill="#fff" stroke="#b8b8b8" stroke-width="1"/><path d="M2.5 6 H6.5" stroke="#9a9a9a" stroke-width="1"/></svg>
<svg style="left:426px;top:207px;" width="10" height="10" viewBox="0 0 10 10"><path d="M0.5 0.5 H8.5 V6 L4.5 9.5 L0.5 6 Z" fill="#fff" stroke="#b8b8b8" stroke-width="1"/><path d="M2.5 4 H6.5" stroke="#9a9a9a" stroke-width="1"/></svg>
<svg style="left:444px;top:184px;" width="11" height="14" viewBox="0 0 11 14"><circle cx="5.5" cy="5" r="4.8" fill="#f4a623"/><rect x="3.3" y="8" width="4.4" height="2" fill="#f4a623"/><path d="M3.3 11 H7.7 M3.8 12.8 H7.2" stroke="#8c8c8c" stroke-width="1"/></svg>
<div class="a" style="left:371px;top:432px;width:982px;height:24px;background:#f2f2f2;"></div>
<div class="a" style="left:371px;top:432px;width:982px;height:1px;background:#e4e4e4;"></div>
<svg style="left:1283px;top:120px;" width="12" height="11" viewBox="0 0 12 11"><path d="M6 0.3 L11.8 10.7 H0.2 Z" fill="#e8c31a"/><path d="M6 3.5 V7" stroke="#fff" stroke-width="1.6"/><circle cx="6" cy="8.9" r="0.9" fill="#fff"/></svg>
<div class="t" style="left:1298px;top:116.50px;font-size:13px;color:#6e6e6e;font-family:'Liberation Sans',sans-serif;">2</div>
<svg style="left:1316px;top:122px;" width="9" height="6" viewBox="0 0 9 6"><path d="M0.5 5.5 L4.5 1 L8.5 5.5" fill="none" stroke="#6e6e6e" stroke-width="1.3"/></svg>
<svg style="left:1337px;top:123px;" width="9" height="6" viewBox="0 0 9 6"><path d="M0.5 0.5 L4.5 5 L8.5 0.5" fill="none" stroke="#6e6e6e" stroke-width="1.3"/></svg>
<svg style="left:1226px;top:315px;" width="148" height="85" viewBox="0 0 148 85"><defs><linearGradient id="sg" x1="0" y1="0" x2="0.3" y2="1"><stop offset="0" stop-color="#d3c6f0"/><stop offset="0.55" stop-color="#dfc6e8"/><stop offset="1" stop-color="#f2cbe0"/></linearGradient></defs>
<g opacity="0.92">
<path d="M45 9 H118 Q138 9 146 24 L148 28 V83 H26 Q1 83 1 57.5 Q1 32 26 32 H45 Z" fill="url(#sg)"/>
<path d="M15 14 L43 9 L47 30 L18 34 Z" fill="#f4f4ee" stroke="#d8d8d0" stroke-width="0.6"/><rect x="19" y="14.5" width="9" height="5" fill="#7cc07a"/><rect x="19" y="13.5" width="5" height="2" fill="#e9a04f"/><circle cx="37" cy="19" r="1.3" fill="#e0b24a"/>
<ellipse cx="105" cy="43" rx="34" ry="26" fill="#fff"/>
<path d="M64 83 Q66 66 82 63 L120 64 Q128 68 128 83 Z" fill="#cbbfee"/>
<path d="M97 11 Q96 0 104 3 Q110 -2 116 6 Q112 13 104 13 Z" fill="#c3dc8f"/>
<ellipse cx="80" cy="47" rx="5" ry="3.2" fill="#f9cfdc"/><ellipse cx="120" cy="50" rx="5" ry="3.2" fill="#f9cfdc"/>
<circle cx="86" cy="44" r="2.6" fill="#c57c94"/><circle cx="111" cy="47" r="2.6" fill="#c57c94"/>
<path d="M93 46 q2.5 4 5 0 q2.5 4 5 0" fill="none" stroke="#8a6a7a" stroke-width="1"/>
<path d="M138 75 Q146 70 148 80 V83 H134 Z" fill="#fff"/>
<text x="20" y="52" font-size="15" fill="#fff" font-family="Liberation Sans">半 中</text>
<path d="M30 62 L35.5 60 Q38 62 40.5 60 L46 62 L48 67 L44.5 68 V76 H34 V68 L28 67 Z" fill="#fff"/>
<path d="M54 73 L56 68 M60 72 A2 2 0 1 0 60.1 72" fill="none" stroke="#fff" stroke-width="1.2"/>
</g></svg>
<div class="a" style="left:30px;top:456px;width:1323px;height:1px;background:#cbcbcb;"></div>
<div class="a" style="left:30px;top:457px;width:1323px;height:26px;background:#f2f2f2;"></div>
<div class="a" style="left:30px;top:483px;width:1323px;height:1px;background:#cbcbcb;"></div>
<div class="t" style="left:36.7px;top:460.90px;font-size:13px;color:#000;font-family:'Liberation Sans',sans-serif;">Build:</div>
<div class="t" style="left:87.5px;top:460.90px;font-size:13px;color:#000;font-family:'Liberation Sans',sans-serif;">Sync</div>
<svg style="left:120.5px;top:467px;" width="8" height="8" viewBox="0 0 8 8"><path d="M0.5 0.5 L7.5 7.5 M7.5 0.5 L0.5 7.5" stroke="#b0b0b0" stroke-width="1.1"/></svg>
<div class="a" style="left:75px;top:481px;width:64px;height:3px;background:#a6aab6;"></div>
<svg style="left:1308px;top:463.5px;" width="13" height="13" viewBox="0 0 13 13"><circle cx="6.5" cy="6.5" r="4.4639999999999995" fill="#6e6e6e"/><rect x="5.14" y="0.30" width="2.73" height="12.40" rx="0.62" fill="#6e6e6e" transform="rotate(0 6.5 6.5)"/><rect x="5.14" y="0.30" width="2.73" height="12.40" rx="0.62" fill="#6e6e6e" transform="rotate(60 6.5 6.5)"/><rect x="5.14" y="0.30" width="2.73" height="12.40" rx="0.62" fill="#6e6e6e" transform="rotate(120 6.5 6.5)"/><circle cx="6.5" cy="6.5" r="2.0460000000000003" fill="#f2f2f2"/></svg>
<div class="a" style="left:1334px;top:469px;width:12px;height:2px;background:#6e6e6e;"></div>
<div class="a" style="left:30px;top:484px;width:28px;height:201px;background:#f2f2f2;"></div>
<div class="a" style="left:58px;top:484px;width:1px;height:201px;background:#cbcbcb;"></div>
<svg style="left:37.5px;top:492.5px;" width="13" height="13" viewBox="0 0 13 13"><path d="M11 4.5 A5 5 0 0 0 2 4" fill="none" stroke="#6e6e6e" stroke-width="1.6"/><path d="M2 8.5 A5 5 0 0 0 11 9" fill="none" stroke="#6e6e6e" stroke-width="1.6"/><path d="M12.5 1 V6 H7.5 Z" fill="#6e6e6e"/><path d="M0.5 12 V7 H5.5 Z" fill="#6e6e6e"/></svg>
<div class="a" style="left:39.2px;top:519.8px;width:10px;height:10px;background:#c4c4c4;"></div>
<svg style="left:37px;top:544px;" width="15" height="14" viewBox="0 0 15 14"><path d="M0.8 13.4 L6.2 8" stroke="#6e6e6e" stroke-width="1.4"/><path d="M4.2 6.6 L8.6 3.2 L8.2 1.4 L9.6 0.2 L14 4.6 L12.8 6 L11 5.6 L7.6 10 L8 11.8 L6.6 13 L1.2 7.6 L2.4 6.2 Z" fill="#6e6e6e"/></svg>
<svg style="left:37px;top:571.5px;" width="16" height="15" viewBox="0 0 16 15"><path d="M0.4 5.4 Q7 -2.6 13.6 5.4 Q7 13.4 0.4 5.4 Z" fill="#6e6e6e"/><circle cx="7" cy="5.4" r="3.3" fill="#f2f2f2"/><circle cx="7" cy="5.4" r="2" fill="#6e6e6e"/><path d="M9.6 11.6 H15.4 L12.5 14.6 Z" fill="#222" stroke="#f2f2f2" stroke-width="0.6"/></svg>
<div class="a" style="left:59px;top:484px;width:540px;height:201px;background:#ffffff;"></div>
<div class="t" style="left:64.8px;top:482.70px;font-size:13px;color:#000;font-family:'Liberation Sans',sans-serif;font-weight:bold;">UniPlugin-Hello-AS:</div>
<div class="t" style="left:191.3px;top:482.70px;font-size:13px;color:#000;font-family:'Liberation Sans',sans-serif;">failed</div>
<div class="t" style="left:227px;top:482.70px;font-size:13px;color:#8c8c8c;font-family:'Liberation Sans',sans-serif;">At 2022/9/21 10:03</div>
<svg style="left:63.5px;top:508.5px;" width="16" height="13" viewBox="0 0 16 13"><path transform="translate(0.5 1)" d="M0.5 11 C0.2 7.5 0.8 3.5 3.5 2.6 C5.5 2 8 2 10 2.2 C11 2.3 11.8 1.8 12.4 1 C13 0.2 14.2 0 14.6 0.9 C14.9 1.6 14.3 2.6 13.6 2.6 C13 2.6 12.8 3.4 12.6 4.5 L12.2 7 L12.2 11 L9.6 11 L9.4 8.6 C8 8.9 6.4 8.9 5.2 8.6 L5 11 Z" fill="#a3a8ad"/></svg>
<div class="t" style="left:82.6px;top:502.80px;font-size:13px;color:#000;font-family:'Liberation Sans',sans-serif;">build.gradle</div>
<div class="t" style="left:156.4px;top:502.80px;font-size:13px;color:#8c8c8c;font-family:'Liberation Sans',sans-serif;">Jy-test 1 error</div>
<div class="a" style="left:59px;top:524px;width:540px;height:20px;background:#d5d5d5;"></div>
<svg style="left:82.5px;top:528px;" width="13" height="13" viewBox="0 0 13 13"><circle cx="6.5" cy="6.5" r="6.5" fill="#db5c5c"/><rect x="5.6" y="2.8" width="1.8" height="5" fill="#fff"/><circle cx="6.5" cy="9.8" r="1" fill="#fff"/></svg>
<div class="t" style="left:100.3px;top:523.32px;font-size:13.5px;color:#000;font-family:'Liberation Sans',sans-serif;">No signature of method: build_5xeotmsdnfjyeysk7xu5dkx3f.android()</div>
<div class="a" style="left:70.5px;top:675px;width:106px;height:10px;background:#e0e0e0;"></div>
<div class="a" style="left:599px;top:484px;width:1px;height:201px;background:#cbcbcb;"></div>
<div class="a" style="left:600px;top:484px;width:725px;height:201px;background:#ffffff;"></div>
<div class="a" style="left:1315px;top:570px;width:10px;height:107px;background:#e0e0e0;"></div>
<div class="a" style="left:600px;top:675px;width:212px;height:10px;background:#e0e0e0;"></div>
<div class="clip" style="left:600px;top:484px;width:725px;height:201px">
<div class="a" style="left:554.3px;top:47.299999999999955px;width:168px;height:22px;background:#edf5ea;"></div>
<div class="t" style="left:161.60000000000002px;top:48.95px;font-size:13.33px;color:#000;font-family:'Liberation Mono',monospace;-webkit-text-stroke:0.1px currentColor"><span style="color:#982a2a">A problem occurred evaluating project &#x27;:Jy-test&#x27;. </span><span style="color:#5f7d5f">&lt;127 internal lines&gt;</span></div>
<div class="t" style="left:233.60000000000002px;top:70.95px;font-size:13.33px;color:#000;font-family:'Liberation Mono',monospace;-webkit-text-stroke:0.1px currentColor"><span style="color:#982a2a">No signature of method: build_5xeotmsdnfjyeysk7xu5dkx3f.android() is applicable</span></div>
<div class="t" style="left:-110.39999999999998px;top:92.95px;font-size:13.33px;color:#000;font-family:'Liberation Mono',monospace;-webkit-text-stroke:0.1px currentColor"><span style="color:#982a2a">at build_5xeotmsdnfjyeysk7xu5dkx3f.run(</span><span style="color:#3574b4"><span style="text-decoration:underline;text-underline-offset:3px;text-decoration-thickness:1px">D:\Android_Uniapp\writeDemo\UniPlugin-Hello-AS\Jy-test\build.gradle:5</span></span><span style="color:#982a2a">)</span></div>
</div>
<div class="a" style="left:1325px;top:484px;width:28px;height:201px;background:#f2f2f2;"></div>
<svg style="left:1332px;top:492.5px;" width="14" height="13" viewBox="0 0 14 13"><path d="M0 1 H13 M0 5 H11 A2.5 2.5 0 0 1 11 10 H7 M0 9 H3.5 M0 13 H3.5" fill="none" stroke="#6e6e6e" stroke-width="1.5"/><path d="M8 7.5 L5.5 10 L8 12.5 Z" fill="#6e6e6e"/></svg>
<div class="a" style="left:1328px;top:514.7px;width:21.5px;height:21px;background:#dadada;border-radius:3px"></div>
<svg style="left:1332px;top:518.5px;" width="14" height="13" viewBox="0 0 14 13"><path d="M0 2.5 H5 M0 7 H5 M0 12 H13" stroke="#6e6e6e" stroke-width="1.6"/><path d="M9.5 0 V8" stroke="#6e6e6e" stroke-width="1.6"/><path d="M6.3 5.5 L9.5 9.5 L12.7 5.5 Z" fill="#6e6e6e"/></svg>
<div class="a" style="left:8px;top:685px;width:1366px;height:1px;background:#cbcbcb;"></div>
<div class="a" style="left:8px;top:686px;width:1366px;height:21px;background:#f2f2f2;"></div>
<div class="a" style="left:8px;top:707px;width:1366px;height:1px;background:#cbcbcb;"></div>
<svg style="left:43px;top:690.5px;" width="9" height="14" viewBox="0 0 9 14"><circle cx="2" cy="2" r="1.6" fill="#6e6e6e"/><circle cx="7" cy="2" r="1.6" fill="#6e6e6e"/><path d="M2 2 V13 M7 2 Q7 6 2 8" fill="none" stroke="#6e6e6e" stroke-width="1.8"/></svg>
<div class="t" style="left:58.1px;top:687.95px;font-size:11.7px;color:#000;font-family:'Liberation Sans',sans-serif;">Version Control</div>
<svg style="left:163px;top:692px;" width="10" height="11" viewBox="0 0 10 11"><path d="M0 1 H2 M0 5 H2 M0 9 H2 M3.5 1 H10 M3.5 5 H10 M3.5 9 H10" stroke="#6e6e6e" stroke-width="1.6"/></svg>
<div class="t" style="left:178.3px;top:687.95px;font-size:11.7px;color:#000;font-family:'Liberation Sans',sans-serif;">TODO</div>
<svg style="left:231.5px;top:691.5px;" width="10" height="10" viewBox="0 0 10 10"><circle cx="5" cy="5" r="5" fill="#db5c5c"/><rect x="4.2" y="2" width="1.6" height="3.9" fill="#fff"/><circle cx="5" cy="7.6" r="0.9" fill="#fff"/></svg>
<div class="t" style="left:247.4px;top:687.95px;font-size:11.7px;color:#000;font-family:'Liberation Sans',sans-serif;">Problems</div>
<div class="a" style="left:598px;top:686px;width:48px;height:21px;background:#c9c9c9;"></div>
<svg style="left:598px;top:690px;" width="9" height="12" viewBox="0 0 9 12"><path d="M0 4 L6 10" stroke="#6e6e6e" stroke-width="2"/></svg>
<div class="t" style="left:610.2px;top:687.95px;font-size:11.7px;color:#000;font-family:'Liberation Sans',sans-serif;">Build</div>
<svg style="left:657px;top:692px;" width="14" height="9" viewBox="0 0 14 9"><path d="M1 8.5 A6 6 0 0 1 13 8.5" fill="none" stroke="#6e6e6e" stroke-width="2"/><path d="M5.5 8.5 L9.5 3" stroke="#6e6e6e" stroke-width="1.8"/></svg>
<div class="t" style="left:674.6px;top:687.95px;font-size:11.7px;color:#000;font-family:'Liberation Sans',sans-serif;">Profiler</div>
<svg style="left:1144px;top:691.5px;" width="13" height="12" viewBox="0 0 13 12"><path d="M6.5 11.2 A5.5 5.5 0 1 1 12 5.7 V11.2 Z" fill="none" stroke="#6e6e6e" stroke-width="1.4"/></svg>
<div class="t" style="left:1161.6px;top:687.95px;font-size:11.7px;color:#000;font-family:'Liberation Sans',sans-serif;">Event Log</div>
<svg style="left:1236px;top:691px;" width="13" height="12" viewBox="0 0 13 12"><path d="M0.5 8 V0.5 H9 M2.5 10 V2.5 H11" fill="none" stroke="#6e6e6e" stroke-width="1"/><circle cx="8" cy="8" r="2.4" fill="#f2f2f2" stroke="#6e6e6e" stroke-width="1"/><path d="M9.8 9.8 L12 12" stroke="#6e6e6e" stroke-width="1.2"/></svg>
<div class="t" style="left:1253.4px;top:687.95px;font-size:11.7px;color:#000;font-family:'Liberation Sans',sans-serif;">Layout Inspector</div>
<div class="a" style="left:8px;top:708px;width:1366px;height:20px;background:#f2f2f2;"></div>
<svg style="left:13.5px;top:712px;" width="13" height="12" viewBox="0 0 13 12"><rect x="3" y="0.5" width="9" height="8" fill="none" stroke="#6e6e6e" stroke-width="1"/><path d="M0.5 3 V11.5 H9.5" fill="none" stroke="#6e6e6e" stroke-width="1"/></svg>
<div class="t" style="left:35.4px;top:707.70px;font-size:12.4px;color:#000;font-family:'Liberation Sans',sans-serif;">Create new Java class</div>
<div class="t" style="left:1134.3px;top:707.70px;font-size:12.4px;color:#000;font-family:'Liberation Sans',sans-serif;">5:10</div>
<div class="t" style="left:1170px;top:707.70px;font-size:12.4px;color:#000;font-family:'Liberation Sans',sans-serif;">LF</div>
<div class="t" style="left:1194px;top:707.70px;font-size:12.4px;color:#000;font-family:'Liberation Sans',sans-serif;">UTF-8</div>
<div class="t" style="left:1239.7px;top:707.70px;font-size:12.4px;color:#000;font-family:'Liberation Sans',sans-serif;">4 spaces</div>
<svg style="left:1304.5px;top:712px;" width="9" height="11" viewBox="0 0 9 11"><rect x="0" y="5" width="9" height="6" fill="#5a5a5a"/><path d="M2 5 V3.2 A2.5 2.5 0 0 1 7 3.2 V5" fill="none" stroke="#5a5a5a" stroke-width="1.3"/></svg>
<svg style="left:1352px;top:712px;" width="13" height="13" viewBox="0 0 13 13"><rect x="0" y="0" width="13" height="13" fill="#5a5a5a"/><rect x="1.5" y="1.5" width="10" height="10" fill="#7a7a7a"/><rect x="5.5" y="3" width="2.2" height="4.5" fill="#fff"/><rect x="5.5" y="8.5" width="2.2" height="2" fill="#fff"/></svg>
<div class="t" style="left:1209px;top:709.28px;font-size:16.5px;color:rgba(100,100,100,0.42);font-family:'Liberation Sans',sans-serif;text-shadow:0 0 1px #fff,0 0 1px #fff;letter-spacing:0.4px">@稀土掘金技术社区</div>
<div class="a" style="left:8px;top:728px;width:1366px;height:8px;background:#0b0d12;"></div>
<div class="a" style="left:941px;top:728px;width:49px;height:8px;background:#3a3c40;"></div>
<div class="t" style="left:1321px;top:725.84px;font-size:12px;color:#fff;font-family:'Liberation Sans',sans-serif;">10:04</div>
<!--MENUS-->
<div class="a" style="left:595px;top:242px;width:4px;height:497px;background:linear-gradient(to right, rgba(0,0,0,0.10), rgba(0,0,0,0));"></div>
<div class="a" style="left:257px;top:239px;width:339px;height:497px;background:#f2f2f2;border:1px solid #cdcdcd;border-bottom:none"></div>
<div class="a" style="left:258px;top:245px;width:337px;height:21px;background:#2675bf;"></div>
<div class="t" style="left:289.8px;top:246.03px;font-size:12.9px;color:#ffffff;font-family:'Liberation Sans',sans-serif;">New</div>
<svg style="left:581px;top:251.0px;" width="6" height="9" viewBox="0 0 6 9"><path d="M1 0.5 L5 4.5 L1 8.5" fill="none" stroke="#ffffff" stroke-width="1.2"/></svg>
<div class="a" style="left:268px;top:270px;width:321px;height:1px;background:#d6d6d6;"></div>
<div class="t" style="left:289.8px;top:276.03px;font-size:12.9px;color:#000;font-family:'Liberation Sans',sans-serif;">Cu<u>t</u></div>
<div class="t" style="right:784.5px;top:276.03px;font-size:12.9px;color:#8c8c8c">Ctrl+X</div>
<svg style="left:270px;top:279px;" width="15" height="14" viewBox="0 0 15 14"><circle cx="2.9" cy="3" r="2.1" fill="none" stroke="#6e6e6e" stroke-width="1.7"/><circle cx="2.9" cy="10.2" r="2.1" fill="none" stroke="#6e6e6e" stroke-width="1.7"/><path d="M4.6 4.4 L13.6 11.8 M4.6 8.8 L13.6 1.4" stroke="#6e6e6e" stroke-width="1.9"/></svg>
<div class="t" style="left:289.8px;top:297.03px;font-size:12.9px;color:#000;font-family:'Liberation Sans',sans-serif;"><u>C</u>opy</div>
<div class="t" style="right:784.5px;top:297.03px;font-size:12.9px;color:#8c8c8c">Ctrl+C</div>
<svg style="left:270.5px;top:299px;" width="15" height="14" viewBox="0 0 15 14"><path d="M0.9 9.5 V0.9 H9" fill="none" stroke="#6e6e6e" stroke-width="1.7"/><rect x="3.3" y="3.3" width="9" height="9.5" fill="#6e6e6e"/><path d="M5 5.9 H10.8 M5 8.3 H10.8 M5 10.7 H10.8" stroke="#f2f2f2" stroke-width="0.9"/></svg>
<div class="t" style="left:289.8px;top:318.03px;font-size:12.9px;color:#000;font-family:'Liberation Sans',sans-serif;">Copy Path/Reference...</div>
<div class="t" style="left:289.8px;top:339.03px;font-size:12.9px;color:#000;font-family:'Liberation Sans',sans-serif;"><u>P</u>aste</div>
<div class="t" style="right:784.5px;top:339.03px;font-size:12.9px;color:#8c8c8c">Ctrl+V</div>
<svg style="left:271.5px;top:341px;" width="15" height="14" viewBox="0 0 15 14"><rect x="0.9" y="2.2" width="9.2" height="10.8" fill="none" stroke="#6e6e6e" stroke-width="1.8"/><rect x="2.6" y="0.3" width="5.8" height="3.2" fill="#6e6e6e"/></svg>
<div class="a" style="left:268px;top:363px;width:321px;height:1px;background:#d6d6d6;"></div>
<div class="t" style="left:289.8px;top:369.03px;font-size:12.9px;color:#000;font-family:'Liberation Sans',sans-serif;">Find <u>U</u>sages</div>
<div class="t" style="right:784.5px;top:369.03px;font-size:12.9px;color:#8c8c8c">Alt+F7</div>
<div class="t" style="left:289.8px;top:390.03px;font-size:12.9px;color:#000;font-family:'Liberation Sans',sans-serif;">Find in Files...</div>
<div class="t" style="right:784.5px;top:390.03px;font-size:12.9px;color:#8c8c8c">Ctrl+Shift+F</div>
<div class="t" style="left:289.8px;top:411.03px;font-size:12.9px;color:#000;font-family:'Liberation Sans',sans-serif;">Repl<u>a</u>ce in Files...</div>
<div class="t" style="right:784.5px;top:411.03px;font-size:12.9px;color:#8c8c8c">Ctrl+Shift+R</div>
<div class="t" style="left:289.8px;top:432.03px;font-size:12.9px;color:#000;font-family:'Liberation Sans',sans-serif;">Analy<u>z</u>e</div>
<svg style="left:581px;top:437.0px;" width="6" height="9" viewBox="0 0 6 9"><path d="M1 0.5 L5 4.5 L1 8.5" fill="none" stroke="#6e6e6e" stroke-width="1.2"/></svg>
<div class="a" style="left:268px;top:456px;width:321px;height:1px;background:#d6d6d6;"></div>
<div class="t" style="left:289.8px;top:461.53px;font-size:12.9px;color:#000;font-family:'Liberation Sans',sans-serif;"><u>R</u>efactor</div>
<svg style="left:581px;top:466.5px;" width="6" height="9" viewBox="0 0 6 9"><path d="M1 0.5 L5 4.5 L1 8.5" fill="none" stroke="#6e6e6e" stroke-width="1.2"/></svg>
<div class="a" style="left:268px;top:486px;width:321px;height:1px;background:#d6d6d6;"></div>
<div class="t" style="left:289.8px;top:491.53px;font-size:12.9px;color:#000;font-family:'Liberation Sans',sans-serif;">Bookmarks</div>
<svg style="left:581px;top:496.5px;" width="6" height="9" viewBox="0 0 6 9"><path d="M1 0.5 L5 4.5 L1 8.5" fill="none" stroke="#6e6e6e" stroke-width="1.2"/></svg>
<div class="a" style="left:268px;top:516px;width:321px;height:1px;background:#d6d6d6;"></div>
<div class="t" style="left:289.8px;top:521.53px;font-size:12.9px;color:#000;font-family:'Liberation Sans',sans-serif;"><u>R</u>eformat Code</div>
<div class="t" style="right:784.5px;top:521.53px;font-size:12.9px;color:#8c8c8c">Ctrl+Alt+L</div>
<div class="t" style="left:289.8px;top:542.53px;font-size:12.9px;color:#000;font-family:'Liberation Sans',sans-serif;">Optimi<u>z</u>e Imports</div>
<div class="t" style="right:784.5px;top:542.53px;font-size:12.9px;color:#8c8c8c">Ctrl+Alt+O</div>
<div class="t" style="left:289.8px;top:563.53px;font-size:12.9px;color:#000;font-family:'Liberation Sans',sans-serif;"><u>D</u>elete...</div>
<div class="t" style="right:784.5px;top:563.53px;font-size:12.9px;color:#8c8c8c">Delete</div>
<div class="a" style="left:268px;top:588px;width:321px;height:1px;background:#d6d6d6;"></div>
<div class="t" style="left:289.8px;top:593.53px;font-size:12.9px;color:#000;font-family:'Liberation Sans',sans-serif;">Open In</div>
<svg style="left:581px;top:598.5px;" width="6" height="9" viewBox="0 0 6 9"><path d="M1 0.5 L5 4.5 L1 8.5" fill="none" stroke="#6e6e6e" stroke-width="1.2"/></svg>
<div class="a" style="left:268px;top:618px;width:321px;height:1px;background:#d6d6d6;"></div>
<div class="t" style="left:289.8px;top:623.53px;font-size:12.9px;color:#000;font-family:'Liberation Sans',sans-serif;">Local <u>H</u>istory</div>
<svg style="left:581px;top:628.5px;" width="6" height="9" viewBox="0 0 6 9"><path d="M1 0.5 L5 4.5 L1 8.5" fill="none" stroke="#6e6e6e" stroke-width="1.2"/></svg>
<div class="t" style="left:289.8px;top:644.53px;font-size:12.9px;color:#000;font-family:'Liberation Sans',sans-serif;">Reload from Disk</div>
<svg style="left:271px;top:648px;" width="15" height="14" viewBox="0 0 15 14"><g transform="translate(12.4 0) scale(-1 1)"><path d="M10.8 4.4 A5.2 5.2 0 0 0 1.2 5.6" fill="none" stroke="#6e6e6e" stroke-width="1.9"/><path d="M1.5 7.8 A5.2 5.2 0 0 0 11.1 6.6" fill="none" stroke="#6e6e6e" stroke-width="1.9"/><path d="M12.6 0.8 V6 H7.4 Z" fill="#6e6e6e"/><path d="M-0.2 12 V6.8 H5 Z" fill="#6e6e6e"/></g></svg>
<div class="a" style="left:268px;top:669px;width:321px;height:1px;background:#d6d6d6;"></div>
<div class="t" style="left:289.8px;top:674.53px;font-size:12.9px;color:#000;font-family:'Liberation Sans',sans-serif;">Compare With...</div>
<div class="t" style="right:784.5px;top:674.53px;font-size:12.9px;color:#8c8c8c">Ctrl+D</div>
<svg style="left:270px;top:677.5px;" width="15" height="14" viewBox="0 0 15 14"><path d="M6 3.8 H14.2" stroke="#3b95d4" stroke-width="2.4"/><path d="M9.4 -0.2 L4.8 3.8 L9.4 7.8 Z" fill="#3b95d4"/><path d="M0 9.6 H8.2" stroke="#3b95d4" stroke-width="2.4"/><path d="M4.8 5.6 L9.4 9.6 L4.8 13.6 Z" fill="#3b95d4"/><path d="M4.2 12.6 L10.6 1.2" stroke="#f2f2f2" stroke-width="1.3"/></svg>
<div class="a" style="left:268px;top:699px;width:321px;height:1px;background:#d6d6d6;"></div>
<div class="t" style="left:289.8px;top:704.53px;font-size:12.9px;color:#000;font-family:'Liberation Sans',sans-serif;">Mark Directory as</div>
<svg style="left:581px;top:709.5px;" width="6" height="9" viewBox="0 0 6 9"><path d="M1 0.5 L5 4.5 L1 8.5" fill="none" stroke="#6e6e6e" stroke-width="1.2"/></svg>
<div class="a" style="left:268px;top:729px;width:321px;height:1px;background:#d6d6d6;"></div>
<div class="a" style="left:595px;top:239px;width:259px;height:342px;background:#f2f2f2;border:1px solid #cdcdcd"></div>
<div class="t" style="left:627.6px;top:246.03px;font-size:12.9px;color:#000;font-family:'Liberation Sans',sans-serif;">C++ Class</div>
<svg style="left:608px;top:248px;" width="15" height="15" viewBox="0 0 15 15"><rect x="0" y="0" width="14" height="13.5" rx="2.5" fill="#c7b8f2"/><text x="4" y="10" font-size="9" font-weight="bold" font-family="Liberation Sans" fill="#5e5290">s</text></svg>
<div class="a" style="left:606px;top:270px;width:237px;height:1px;background:#d6d6d6;"></div>
<div class="t" style="left:627.6px;top:276.03px;font-size:12.9px;color:#000;font-family:'Liberation Sans',sans-serif;">C/C++ Source File</div>
<svg style="left:608px;top:278px;" width="15" height="15" viewBox="0 0 15 15"><path d="M5 0 H12 V8 H2 V3 Z" fill="#9aa0a6"/><path d="M2 3 L5 0 V3 Z" fill="#f2f2f2"/><rect x="0" y="8" width="15" height="7" fill="#c7b8f2"/><text x="1.2" y="14" font-size="6.5" font-weight="bold" font-family="Liberation Sans" fill="#4c4080">C++</text></svg>
<div class="t" style="left:627.6px;top:297.03px;font-size:12.9px;color:#000;font-family:'Liberation Sans',sans-serif;">C/C++ Header File</div>
<svg style="left:608px;top:299px;" width="15" height="15" viewBox="0 0 15 15"><path d="M5 0 H12 V8 H2 V3 Z" fill="#9aa0a6"/><path d="M2 3 L5 0 V3 Z" fill="#f2f2f2"/><rect x="0" y="8" width="15" height="7" fill="#f2c46b"/><text x="2.5" y="14" font-size="6.5" font-weight="bold" font-family="Liberation Sans" fill="#4a3a10">H</text></svg>
<div class="a" style="left:606px;top:321.5px;width:237px;height:1px;background:#d6d6d6;"></div>
<div class="a" style="left:596px;top:326px;width:257px;height:21px;background:#2675bf;"></div>
<div class="t" style="left:627.6px;top:327.03px;font-size:12.9px;color:#fff;font-family:'Liberation Sans',sans-serif;">Java Class</div>
<svg style="left:608px;top:329.5px;" width="15" height="15" viewBox="0 0 15 15"><circle cx="7" cy="7" r="6.8" fill="#78c6db"/><text x="3.6" y="10.2" font-size="9" font-weight="bold" font-family="Liberation Sans" fill="#2d7c8c">C</text></svg>
<div class="t" style="left:627.6px;top:348.03px;font-size:12.9px;color:#000;font-family:'Liberation Sans',sans-serif;">Kotlin Class/File</div>
<svg style="left:609px;top:349.5px;" width="15" height="15" viewBox="0 0 15 15"><path d="M4 0 H11 V14 H1 V3 Z" fill="#9aa0a6"/><path d="M1 3 L4 0 V3 Z" fill="#f2f2f2"/><path d="M6 7 H14 L10 10.5 L14 14 H6 Z" fill="#b39ef2"/></svg>
<div class="t" style="left:627.6px;top:369.03px;font-size:12.9px;color:#000;font-family:'Liberation Sans',sans-serif;">File</div>
<svg style="left:610px;top:370.5px;" width="15" height="15" viewBox="0 0 15 15"><path d="M3.5 0 H10 V14 H0 V3.5 Z" fill="#a9adb1"/><path d="M0 3 L3 0 V3 Z" fill="#d3d6d9"/><path d="M1.8 6.8 H8 M1.8 9 H8 M1.8 11.2 H6.2" stroke="#5f6366" stroke-width="1.1"/></svg>
<div class="t" style="left:627.6px;top:390.03px;font-size:12.9px;color:#000;font-family:'Liberation Sans',sans-serif;">Scratch File</div>
<div class="t" style="right:530.5px;top:390.03px;font-size:12.9px;color:#8c8c8c">Ctrl+Alt+Shift+Insert</div>
<svg style="left:610px;top:391px;" width="15" height="15" viewBox="0 0 15 15"><path d="M3.5 0 H10 V14 H0 V3.5 Z" fill="#a9adb1"/><path d="M0 3 L3 0 V3 Z" fill="#d3d6d9"/><path d="M1.8 6.8 H8 M1.8 9 H8 M1.8 11.2 H6.2" stroke="#5f6366" stroke-width="1.1"/><circle cx="10" cy="3.5" r="4" fill="#389fd6" stroke="#f2f2f2" stroke-width="0.8"/><path d="M10 1.5 V3.8 L11.5 4.8" fill="none" stroke="#fff" stroke-width="0.9"/></svg>
<div class="t" style="left:627.6px;top:411.03px;font-size:12.9px;color:#000;font-family:'Liberation Sans',sans-serif;">Package</div>
<svg style="left:608px;top:414.5px;" width="15" height="15" viewBox="0 0 15 15"><path d="M0 0 H6 L7.5 2.3 H14 V11 H0 Z" fill="#9aa0a6"/><circle cx="5" cy="6.8" r="1.4" fill="#f2f2f2"/></svg>
<div class="t" style="left:627.6px;top:432.03px;font-size:12.9px;color:#000;font-family:'Liberation Sans',sans-serif;">module-info.java</div>
<svg style="left:608px;top:433.5px;" width="15" height="15" viewBox="0 0 15 15"><path d="M5 0 H12 V8 H2 V3 Z" fill="#9aa0a6"/><path d="M2 3 L5 0 V3 Z" fill="#f2f2f2"/><rect x="0" y="8" width="15" height="7" fill="#7cc6e6"/><text x="3" y="14" font-size="6.5" font-weight="bold" font-family="Liberation Sans" fill="#1d4c6a">J</text></svg>
<div class="a" style="left:606px;top:456.5px;width:237px;height:1px;background:#d6d6d6;"></div>
<div class="t" style="left:627.6px;top:462.03px;font-size:12.9px;color:#000;font-family:'Liberation Sans',sans-serif;">Kotlin Script</div>
<svg style="left:609px;top:464.0px;" width="15" height="15" viewBox="0 0 15 15"><path d="M2 0 H10 Q12 0 12 2.5 V8 H8 V14 H3 Q1 14 1 11 V3 Q0 0 2 0 Z" fill="#9aa0a6"/><path d="M6 7 H14 L10 10.5 L14 14 H6 Z" fill="#b39ef2"/></svg>
<div class="t" style="left:627.6px;top:483.03px;font-size:12.9px;color:#000;font-family:'Liberation Sans',sans-serif;">Kotlin Worksheet</div>
<svg style="left:609px;top:485.0px;" width="15" height="15" viewBox="0 0 15 15"><path d="M2 0 H10 Q12 0 12 2.5 V8 H8 V14 H3 Q1 14 1 11 V3 Q0 0 2 0 Z" fill="#9aa0a6"/><path d="M6 7 H14 L10 10.5 L14 14 H6 Z" fill="#b39ef2"/></svg>
<div class="t" style="left:627.6px;top:504.03px;font-size:12.9px;color:#000;font-family:'Liberation Sans',sans-serif;">CMakeLists.txt</div>
<svg style="left:607.8px;top:506px;" width="15" height="15" viewBox="0 0 15 15"><path d="M7 0 L0 12.5 L7 9 Z" fill="#3a4bbf"/><path d="M7 0 L14.2 13.8 L7 9 Z" fill="#d52b2b"/><path d="M0 12.5 L7 9 L14.2 13.8 H0 Z" fill="#3bbd3b"/></svg>
<div class="a" style="left:606px;top:528px;width:237px;height:1px;background:#d6d6d6;"></div>
<div class="t" style="left:627.6px;top:534.03px;font-size:12.9px;color:#000;font-family:'Liberation Sans',sans-serif;">Resource Bundle</div>
<svg style="left:610px;top:536px;" width="15" height="15" viewBox="0 0 15 15"><path d="M3 0 H9 V8 H6 V14 H0 V3 Z" fill="#9aa0a6"/><rect x="5.5" y="9" width="2" height="5" fill="#e97935"/><rect x="8.5" y="6" width="2" height="8" fill="#f2c12e"/><rect x="11.5" y="4" width="2" height="10" fill="#62b543"/></svg>
<div class="t" style="left:627.6px;top:555.03px;font-size:12.9px;color:#000;font-family:'Liberation Sans',sans-serif;">EditorConfig File</div>
<svg style="left:609px;top:557.5px;" width="15" height="15" viewBox="0 0 15 15"><circle cx="6" cy="6" r="4.32" fill="#a3a8ad"/><rect x="4.68" y="0.00" width="2.64" height="12.00" rx="0.60" fill="#a3a8ad" transform="rotate(0 6 6)"/><rect x="4.68" y="0.00" width="2.64" height="12.00" rx="0.60" fill="#a3a8ad" transform="rotate(60 6 6)"/><rect x="4.68" y="0.00" width="2.64" height="12.00" rx="0.60" fill="#a3a8ad" transform="rotate(120 6 6)"/><circle cx="6" cy="6" r="1.98" fill="#f2f2f2"/></svg>
</body></html>
